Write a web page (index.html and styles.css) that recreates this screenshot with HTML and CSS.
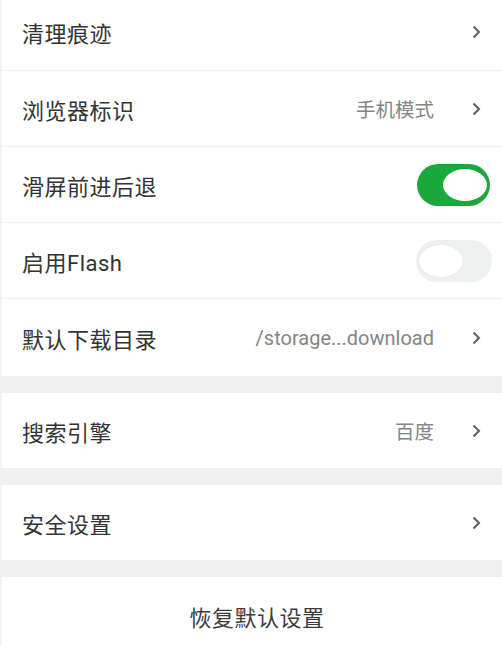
FILE: index.html
```html
<!DOCTYPE html>
<html lang="zh-CN">
<head>
<meta charset="utf-8">
<link rel="stylesheet" href="styles.css">
</head>
<body>
<div class="page">
  <div class="group first">
    <div class="row">
      <span class="label">清理痕迹</span>
      <span class="right"><svg class="chev" viewBox="0 0 9 14"><path d="M1.5 1.5 L7 7 L1.5 12.5"/></svg></span>
    </div>
    <div class="row">
      <span class="label">浏览器标识</span>
      <span class="right"><span class="value">手机模式</span><svg class="chev" viewBox="0 0 9 14"><path d="M1.5 1.5 L7 7 L1.5 12.5"/></svg></span>
    </div>
    <div class="row">
      <span class="label">滑屏前进后退</span>
      <span class="switch on"><span class="knob"></span></span>
    </div>
    <div class="row">
      <span class="label">启用Flash</span>
      <span class="switch off"><span class="knob"></span></span>
    </div>
    <div class="row">
      <span class="label">默认下载目录</span>
      <span class="right"><span class="value path">/storage...download</span><svg class="chev" viewBox="0 0 9 14"><path d="M1.5 1.5 L7 7 L1.5 12.5"/></svg></span>
    </div>
  </div>
  <div class="group">
    <div class="row short">
      <span class="label">搜索引擎</span>
      <span class="right"><span class="value">百度</span><svg class="chev" viewBox="0 0 9 14"><path d="M1.5 1.5 L7 7 L1.5 12.5"/></svg></span>
    </div>
  </div>
  <div class="group">
    <div class="row short">
      <span class="label">安全设置</span>
      <span class="right"><svg class="chev" viewBox="0 0 9 14"><path d="M1.5 1.5 L7 7 L1.5 12.5"/></svg></span>
    </div>
  </div>
  <div class="group">
    <div class="row reset">
      <span class="label">恢复默认设置</span>
    </div>
  </div>
</div>
</body>
</html>
```
FILE: styles.css
```css
html, body {
  margin: 0;
  padding: 0;
  background: #f0f0f0;
}
body {
  font-family: Roboto, "Noto Sans CJK SC", sans-serif;
  overflow: hidden;
}
.page {
  display: flex;
  flex-direction: column;
  gap: 17px;
  margin-top: -7px;
}
.group {
  background: #fff;
  display: flex;
  flex-direction: column;
  border-left: 2px solid #f3f3f3;
}
.row {
  height: 75px;
  display: flex;
  align-items: center;
  justify-content: space-between;
  padding: 0 12px 0 20px;
  border-bottom: 1px solid #f2f2f2;
}
.group .row:first-child {
  height: 77px;
}
.group .row:last-child {
  border-bottom: none;
  height: 77px;
}
.group .row.short {
  height: 75px;
}
.label {
  font-size: 22px;
  letter-spacing: 0.5px;
  color: #333;
}
.right {
  display: flex;
  align-items: center;
}
.value {
  font-size: 19.5px;
  color: #858585;
  margin-right: 38px;
}
.path {
  font-size: 20px;
  letter-spacing: 0;
}
.chev {
  width: 9px;
  height: 14px;
  margin-right: 9px;
  fill: none;
  stroke: #5f5f5f;
  stroke-width: 2;
}
.switch {
  width: 73px;
  height: 42px;
  border-radius: 21px;
  display: flex;
  align-items: center;
  box-sizing: border-box;
  padding: 0 3px;
}
.switch.on {
  background: #1aa83c;
  justify-content: flex-end;
}
.switch.off {
  background: #eef0ef;
  justify-content: flex-start;
  width: 76px;
  margin-right: -2px;
}
.knob {
  width: 44px;
  height: 32px;
  border-radius: 50%;
  background: #fff;
}
.switch.off .knob {
  box-shadow: 0 0 1px rgba(0,0,0,0.12);
}
.reset {
  justify-content: center;
  height: 80px;
}
.reset .label {
  color: #3c3c3c;
  margin-left: 2px;
}
```
